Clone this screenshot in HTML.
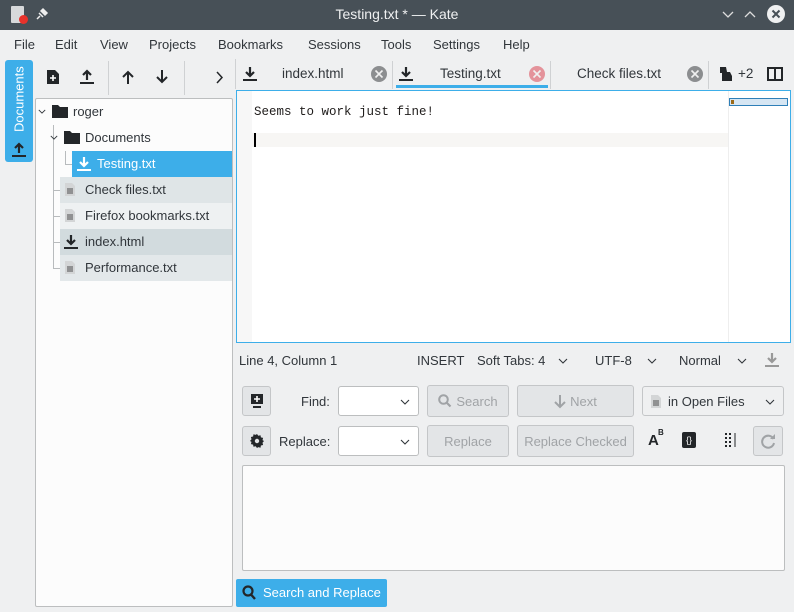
<!DOCTYPE html>
<html><head><style>
*{box-sizing:border-box;margin:0;padding:0}
body{width:794px;height:612px;overflow:hidden;background:#eff0f1;font-family:"Liberation Sans",sans-serif;font-size:13px;color:#31363b;position:relative}
.a{position:absolute}
svg{position:absolute;overflow:visible}
.btn{position:absolute;border:1px solid #c4c6c8;border-radius:3px;background:#e3e5e7;color:#a0a3a6;display:flex;align-items:center;justify-content:center;font-size:13px}
.cb{position:absolute;border:1px solid #bcbebf;border-radius:3px;background:#fff}
.row{position:absolute;height:26px;line-height:26px;font-size:13px}
.menu{position:absolute;top:37px;font-size:13px}
</style></head><body>
<svg width="0" height="0" style="position:absolute">
<defs>
<symbol id="dl" viewBox="0 0 14 16"><path d="M7 1v9M3 6l4 4 4-4" stroke="currentColor" stroke-width="2.2" fill="none"/><rect x="0" y="13" width="14" height="2" fill="currentColor"/></symbol>
<symbol id="ul" viewBox="0 0 14 16"><path d="M7 11V2M3 6l4-4 4 4" stroke="currentColor" stroke-width="2.2" fill="none"/><rect x="0" y="13" width="14" height="2" fill="currentColor"/></symbol>
<symbol id="doc" viewBox="0 0 10 13"><path d="M0 0h7l3 3v10H0z" fill="#d3d5d6"/><path d="M2 6h6M2 8h6M2 10h6" stroke="#4d4d4d" stroke-width="1"/></symbol>
<symbol id="x" viewBox="0 0 16 16"><circle cx="8" cy="8" r="8" fill="currentColor"/><path d="M4.5 4.5l7 7M11.5 4.5l-7 7" stroke="#f0f0f0" stroke-width="1.6"/></symbol>
<symbol id="chev" viewBox="0 0 10 6"><path d="M1 1l4 4 4-4" stroke="#31363b" stroke-width="1.1" fill="none"/></symbol>
<symbol id="fold" viewBox="0 0 16 13"><path d="M0 0h6l2 2h8v11H0z" fill="#232629"/></symbol>
</defs></svg>
<!-- title bar -->
<div class="a" style="left:0;top:0;width:794px;height:30px;background:#475057"></div>
<div class="a" style="left:11px;top:6px;width:13px;height:17px;background:#d7d9db;border-radius:1px"></div>
<div class="a" style="left:19px;top:15px;width:9px;height:9px;background:#e8322b;border-radius:50%"></div>
<svg style="left:36px;top:8px" width="12" height="12"><path d="M4 8L1 11M3 5l4 4M5 3l4 4 2-2-4-4z" stroke="#eee" stroke-width="1.5" fill="#eee"/></svg>
<div class="a" style="left:0;top:6px;width:794px;text-align:center;color:#eff0f1;font-size:14px">Testing.txt * — Kate</div>
<svg style="left:722px;top:11px" width="12" height="7"><path d="M1 1l5 5 5-5" stroke="#ddd" stroke-width="1.3" fill="none"/></svg>
<svg style="left:744px;top:11px" width="12" height="7"><path d="M1 6l5-5 5 5" stroke="#ddd" stroke-width="1.3" fill="none"/></svg>
<svg style="left:767px;top:5px" width="18" height="18"><circle cx="9" cy="9" r="9" fill="#eff0f1"/><path d="M5.5 5.5l7 7M12.5 5.5l-7 7" stroke="#475057" stroke-width="2"/></svg>
<!-- menu -->
<div class="menu" style="left:14px">File</div>
<div class="menu" style="left:55px">Edit</div>
<div class="menu" style="left:100px">View</div>
<div class="menu" style="left:149px">Projects</div>
<div class="menu" style="left:218px">Bookmarks</div>
<div class="menu" style="left:308px">Sessions</div>
<div class="menu" style="left:381px">Tools</div>
<div class="menu" style="left:433px">Settings</div>
<div class="menu" style="left:503px">Help</div>
<!-- sidebar tab -->
<div class="a" style="left:5px;top:60px;width:28px;height:102px;background:#3daee9;border-radius:3px"></div>
<div class="a" style="left:5px;top:64px;width:28px;height:70px;color:#fff;font-size:13px;writing-mode:vertical-rl;transform:rotate(180deg);display:flex;align-items:center;justify-content:center">Documents</div>
<svg style="left:12px;top:142px;color:#232629" width="14" height="16"><use href="#ul"/></svg>
<!-- toolbar -->
<svg style="left:47px;top:70px" width="12" height="14"><path d="M0 0h8l4 4v10H0z" fill="#232629"/><path d="M6 5v6M3 8h6" stroke="#fff" stroke-width="1.6"/></svg>
<svg style="left:80px;top:69px;color:#232629" width="14" height="16"><use href="#ul"/></svg>
<div class="a" style="left:108px;top:61px;width:1px;height:34px;background:#cfd1d3"></div>
<svg style="left:122px;top:70px" width="12" height="14"><path d="M6 14V2M1 7l5-5 5 5" stroke="#232629" stroke-width="2" fill="none"/></svg>
<svg style="left:156px;top:70px" width="12" height="14"><path d="M6 0v12M1 7l5 5 5-5" stroke="#232629" stroke-width="2" fill="none"/></svg>
<div class="a" style="left:184px;top:61px;width:1px;height:34px;background:#cfd1d3"></div>
<svg style="left:216px;top:71px" width="7" height="13"><path d="M1 1l5 5.5L1 12" stroke="#232629" stroke-width="1.5" fill="none"/></svg>
<div class="a" style="left:235px;top:59px;width:1px;height:30px;background:#cfd1d3"></div>
<!-- tabs -->
<svg style="left:243px;top:66px;color:#232629" width="14" height="16"><use href="#dl"/></svg>
<div class="a" style="left:282px;top:66px;font-size:13.5px">index.html</div>
<svg style="left:371px;top:66px;color:#8c8e90" width="16" height="16"><use href="#x"/></svg>
<div class="a" style="left:392px;top:61px;width:1px;height:28px;background:#cfd1d3"></div>
<svg style="left:399px;top:66px;color:#232629" width="14" height="16"><use href="#dl"/></svg>
<div class="a" style="left:440px;top:66px;font-size:13.5px">Testing.txt</div>
<svg style="left:529px;top:66px;color:#e4939b" width="16" height="16"><use href="#x"/></svg>
<div class="a" style="left:396px;top:85px;width:152px;height:3px;background:#3daee9"></div>
<div class="a" style="left:550px;top:61px;width:1px;height:28px;background:#cfd1d3"></div>
<div class="a" style="left:577px;top:66px;font-size:13.5px">Check files.txt</div>
<svg style="left:687px;top:66px;color:#8c8e90" width="16" height="16"><use href="#x"/></svg>
<div class="a" style="left:708px;top:61px;width:1px;height:28px;background:#cfd1d3"></div>
<svg style="left:719px;top:67px" width="14" height="14"><path d="M1 0h6l1 5h3l2 4v5H3V6H1z" fill="#232629"/></svg>
<div class="a" style="left:738px;top:66px;font-size:13.5px">+2</div>
<div class="a" style="left:767px;top:67px;width:16px;height:14px;border:2px solid #232629"></div>
<div class="a" style="left:774px;top:67px;width:2px;height:14px;background:#232629"></div>
<!-- tree -->
<div class="a" style="left:35px;top:98px;width:198px;height:509px;background:#fcfcfc;border:1px solid #bcbebf;border-radius:2px"></div>
<div class="a" style="left:53px;top:125px;width:1px;height:143px;background:#b8bbbd"></div>
<div class="a" style="left:65px;top:151px;width:1px;height:13px;background:#b8bbbd"></div>
<div class="a" style="left:65px;top:164px;width:7px;height:1px;background:#b8bbbd"></div>
<svg style="left:38px;top:109px;width:8px;height:5px"><use href="#chev"/></svg>
<svg style="left:52px;top:105px" width="16" height="13"><use href="#fold"/></svg>
<div class="row" style="left:73px;top:99px">roger</div>
<svg style="left:50px;top:135px;width:8px;height:5px"><use href="#chev"/></svg>
<svg style="left:64px;top:131px" width="16" height="13"><use href="#fold"/></svg>
<div class="row" style="left:85px;top:125px">Documents</div>
<div class="a" style="left:72px;top:151px;width:160px;height:26px;background:#3daee9"></div>
<svg style="left:77px;top:156px;color:#fff" width="14" height="16"><use href="#dl"/></svg>
<div class="row" style="left:97px;top:151px;color:#fff">Testing.txt</div>
<div class="row" style="left:60px;top:177px;width:172px;background:#dfe5e7;padding-left:25px">Check files.txt</div>
<div class="row" style="left:60px;top:203px;width:172px;background:#eef1f2;padding-left:25px">Firefox bookmarks.txt</div>
<div class="row" style="left:60px;top:229px;width:172px;background:#d2dbde;padding-left:25px">index.html</div>
<div class="row" style="left:60px;top:255px;width:172px;background:#e3e8ea;padding-left:25px">Performance.txt</div>
<svg style="left:65px;top:183px" width="10" height="13"><use href="#doc"/></svg>
<svg style="left:65px;top:209px" width="10" height="13"><use href="#doc"/></svg>
<svg style="left:64px;top:234px;color:#232629" width="14" height="16"><use href="#dl"/></svg>
<svg style="left:65px;top:261px" width="10" height="13"><use href="#doc"/></svg>
<div class="a" style="left:53px;top:190px;width:7px;height:1px;background:#b8bbbd"></div>
<div class="a" style="left:53px;top:216px;width:7px;height:1px;background:#b8bbbd"></div>
<div class="a" style="left:53px;top:242px;width:7px;height:1px;background:#b8bbbd"></div>
<div class="a" style="left:53px;top:268px;width:7px;height:1px;background:#b8bbbd"></div>
<!-- editor -->
<div class="a" style="left:236px;top:90px;width:555px;height:253px;background:#fff;border:1px solid #3daee9"></div>
<div class="a" style="left:237px;top:91px;width:15px;height:251px;background:#f7f7f7"></div>
<div class="a" style="left:252px;top:133px;width:476px;height:14px;background:#f7f6f4"></div>
<div class="a" style="left:254px;top:105px;font-family:'Liberation Mono',monospace;font-size:12.5px;color:#1f1c1b">Seems to work just fine!</div>
<div class="a" style="left:254px;top:133px;width:2px;height:14px;background:#000"></div>
<div class="a" style="left:728px;top:91px;width:1px;height:251px;background:#eee"></div>
<div class="a" style="left:729px;top:98px;width:59px;height:8px;background:#d6e6f3;border:1px solid #2e7fb8"></div>
<div class="a" style="left:731px;top:100px;width:3px;height:4px;background:#9a6a1a"></div>
<!-- status -->
<div class="a" style="left:239px;top:353px">Line 4, Column 1</div>
<div class="a" style="left:417px;top:353px">INSERT</div>
<div class="a" style="left:477px;top:353px">Soft Tabs: 4</div>
<svg style="left:558px;top:358px;width:10px;height:6px"><use href="#chev"/></svg>
<div class="a" style="left:595px;top:353px">UTF-8</div>
<svg style="left:647px;top:358px;width:10px;height:6px"><use href="#chev"/></svg>
<div class="a" style="left:679px;top:353px">Normal</div>
<svg style="left:737px;top:358px;width:10px;height:6px"><use href="#chev"/></svg>
<svg style="left:765px;top:352px;color:#999" width="14" height="16"><use href="#dl"/></svg>
<!-- search rows -->
<div class="btn" style="left:242px;top:386px;width:29px;height:30px"><svg style="left:7px;top:7px" width="14" height="14"><path d="M1 0h12v10H1z" fill="#232629"/><rect x="3" y="12" width="8" height="2" fill="#232629"/><path d="M7 2v6M4 5h6" stroke="#fff" stroke-width="1.6"/></svg></div>
<div class="a" style="left:301px;top:394px">Find:</div>
<div class="cb" style="left:338px;top:386px;width:81px;height:30px"><svg style="right:8px;top:12px;width:10px;height:6px"><use href="#chev"/></svg></div>
<div class="btn" style="left:427px;top:385px;width:82px;height:32px;padding-left:18px">Search<svg style="left:10px;top:8px" width="14" height="14"><circle cx="5.5" cy="5.5" r="4.3" stroke="#a0a3a6" stroke-width="2" fill="none"/><path d="M8.5 8.5l4 4" stroke="#a0a3a6" stroke-width="2.2"/></svg></div>
<div class="btn" style="left:517px;top:385px;width:117px;height:32px;padding-left:16px">Next<svg style="left:36px;top:9px" width="12" height="14"><path d="M6 0v12M1 7l5 5 5-5" stroke="#a0a3a6" stroke-width="2" fill="none"/></svg></div>
<div class="btn" style="left:642px;top:386px;width:142px;height:30px;background:#eff0f1;color:#31363b;justify-content:flex-start;padding-left:25px">in Open Files<svg style="left:8px;top:8px" width="10" height="13"><use href="#doc"/></svg><svg style="right:8px;top:12px;width:10px;height:6px"><use href="#chev"/></svg></div>
<div class="btn" style="left:242px;top:426px;width:29px;height:30px"><svg style="left:7px;top:7px" width="14" height="14" viewBox="0 0 14 14"><path d="M7 0l1.3 1.8 2.2-.6.4 2.2 2.2.5-.6 2.2L14 7l-1.5 1.8.6 2.2-2.2.5-.4 2.2-2.2-.6L7 14l-1.3-1.8-2.2.6-.4-2.2-2.2-.5.6-2.2L0 7l1.5-1.8-.6-2.2 2.2-.5.4-2.2 2.2.6z" fill="#232629"/><circle cx="7" cy="7" r="2.2" fill="#e3e5e7"/></svg></div>
<div class="a" style="left:279px;top:434px">Replace:</div>
<div class="cb" style="left:338px;top:426px;width:81px;height:30px"><svg style="right:8px;top:12px;width:10px;height:6px"><use href="#chev"/></svg></div>
<div class="btn" style="left:427px;top:425px;width:82px;height:32px">Replace</div>
<div class="btn" style="left:517px;top:425px;width:117px;height:32px">Replace Checked</div>
<div class="a" style="left:648px;top:432px;font-weight:bold;font-size:15px;color:#232629">A</div>
<div class="a" style="left:658px;top:428px;font-weight:bold;font-size:8px;color:#232629">B</div>
<div class="a" style="left:682px;top:432px;width:14px;height:16px;background:#232629;border-radius:2px;color:#fff;font-size:9px;text-align:center;line-height:16px">{}</div>
<svg style="left:724px;top:433px" width="14" height="14"><path d="M1 1h2M5 1h2M1 5h2M5 5h2M1 9h2M5 9h2M1 13h2M5 13h2" stroke="#232629" stroke-width="2"/><path d="M11 0v14" stroke="#232629" stroke-width="1"/></svg>
<div class="btn" style="left:753px;top:426px;width:30px;height:30px"><svg style="left:7px;top:7px" width="15" height="15"><path d="M12.5 5A6 6 0 1 0 13 9" stroke="#a0a3a6" stroke-width="2" fill="none"/><path d="M9 5h5V0z" fill="#a0a3a6"/></svg></div>
<div class="a" style="left:242px;top:465px;width:543px;height:106px;background:#fcfcfc;border:1px solid #bcbebf;border-radius:2px"></div>
<div class="a" style="left:236px;top:579px;width:151px;height:28px;background:#3daee9;border-radius:2px;color:#fff;font-size:13px;line-height:28px;padding-left:27px">Search and Replace</div>
<svg style="left:242px;top:585px" width="14" height="15"><circle cx="6" cy="6" r="4.5" stroke="#232629" stroke-width="2.2" fill="none"/><path d="M9 9.5l4 4.5" stroke="#232629" stroke-width="2.4"/></svg>
</body></html>
